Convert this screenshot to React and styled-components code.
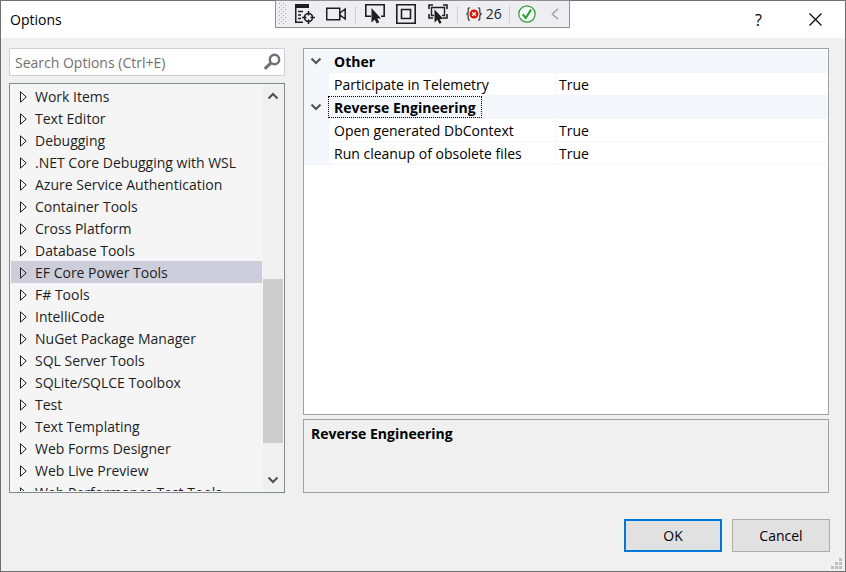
import React from "react";
import styled, { createGlobalStyle, css } from "styled-components";

const GlobalStyle = createGlobalStyle`
  *, *::before, *::after { box-sizing: border-box; }
  body { margin: 0; }
  body, button, input {
    font-family: "Open Sans", "Noto Sans", sans-serif;
    font-size: 14px;
    color: #1e1e1e;
  }
  button { padding: 0; border: 0; background: none; }
  ul { margin: 0; padding: 0; list-style: none; }
  svg { display: block; flex: none; }
`;

const Dialog = styled.div`
  position: relative;
  display: flex;
  flex-direction: column;
  height: 100vh;
  border: 1px solid #707070;
  background: #f0f0f0;
`;

const TitleBar = styled.header`
  display: flex;
  align-items: center;
  height: 37px;
  padding: 0 1px 0 9px;
  background: #fff;
`;

const Title = styled.h1`
  flex: 1;
  margin: 0;
  font-size: 14px;
  font-weight: 400;
  color: #000;
`;

const CaptionButton = styled.button`
  display: flex;
  align-items: center;
  justify-content: center;
  width: 57px;
  height: 36px;
  font-size: 16px;
  color: #000;
`;

const DebugBar = styled.div`
  position: absolute;
  top: -1px;
  left: calc(50% - 148px);
  display: flex;
  align-items: center;
  width: 295px;
  height: 28px;
  border: 1px solid #8f8f94;
  padding-left: 3px;
  background: #eeeef2;
`;

const ToolButton = styled.button`
  display: flex;
  align-items: center;
  justify-content: center;
  gap: 4px;
  width: ${(p) => p.$width || 32}px;
  height: 24px;
  line-height: 20px;
`;

const Separator = styled.span`
  width: 1px;
  height: 17px;
  margin: 0 ${(p) => p.$gap || 2}px;
  background: #cccedb;
`;

const Body = styled.main`
  flex: 1;
  min-height: 0;
  display: grid;
  grid-template-columns: 276px minmax(0, 1fr);
  grid-template-rows: minmax(0, 1fr);
  gap: 18px;
  padding: 10px 16px 0 8px;
`;

const Column = styled.div`
  display: flex;
  flex-direction: column;
  gap: ${(p) => p.$gap}px;
  min-height: 0;
`;

const SearchBox = styled.label`
  display: flex;
  align-items: center;
  height: 28px;
  padding: 0 3px 0 5px;
  border: 1px solid #cccedb;
  background: #fff;
`;

const SearchInput = styled.input`
  flex: 1;
  min-width: 0;
  padding: 0;
  border: 0;
  outline: 0;
  background: none;
  &::placeholder { color: #717171; opacity: 1; }
`;

const TreePanel = styled.div`
  flex: 1;
  display: flex;
  min-height: 0;
  padding: 1px;
  border: 1px solid #828790;
  background: #f5f5f5;
`;

const Tree = styled.ul`
  flex: 1;
  min-width: 0;
  overflow: hidden;
`;

const TreeItem = styled.li`
  display: flex;
  align-items: center;
  gap: 7px;
  height: 22px;
  padding: 2px 0 0 8px;
  line-height: 20px;
  white-space: nowrap;
  background: ${(p) => (p.$selected ? "#cccedb" : "transparent")};
`;

const ScrollBar = styled.div`
  display: flex;
  flex-direction: column;
  width: 20px;
  margin-left: 1px;
  background: #f0f0f0;
`;

const ScrollButton = styled.button`
  display: flex;
  align-items: center;
  justify-content: center;
  height: 22px;
`;

const Track = styled.div`
  flex: 1;
  display: flex;
  flex-direction: column;
`;

const Spacer = styled.div`
  flex: ${(p) => p.$share};
`;

const Thumb = styled.div`
  flex: 164;
  background: #cdcdcd;
`;

const GridPanel = styled.section`
  flex: 1;
  min-height: 0;
  padding-top: 1px;
  border: 1px solid #a0a0a0;
  background: #fff;
`;

const PropertyTable = styled.table`
  width: 100%;
  table-layout: fixed;
  border-collapse: separate;
  border-spacing: 0;
  color: #000;
  line-height: 20px;
`;

const GutterCol = styled.col`
  width: 25px;
`;

const NameCol = styled.col`
  width: 226px;
`;

const cell = css`
  height: 23px;
  padding: 0;
  text-align: left;
  white-space: nowrap;
  border-bottom: 1px solid #f3f7fc;
`;

const Gutter = styled.td`
  ${cell}
  background: #f3f7fc;
`;

const Category = styled.th`
  ${cell}
  font-weight: 700;
  background: #f3f7fc;
`;

const CategoryLabel = styled.span`
  display: inline-block;
  height: 22px;
  margin-left: -1px;
  padding: 2px 5px 0;
  line-height: 18px;
  vertical-align: top;
  border: 1px dotted ${(p) => (p.$focused ? "#000" : "transparent")};
`;

const Name = styled.th`
  ${cell}
  padding: 2px 0 0 5px;
  font-weight: 400;
`;

const Value = styled.td`
  ${cell}
  padding: 2px 0 0 3px;
  border-left: 1px solid #f3f7fc;
`;

const ToggleButton = styled.button`
  display: flex;
  align-items: center;
  justify-content: center;
  width: 24px;
  height: 22px;
`;

const HelpPanel = styled.section`
  height: 74px;
  padding: 4px 7px;
  border: 1px solid #a0a0a0;
`;

const HelpTitle = styled.h2`
  margin: 0;
  font-size: 14px;
  line-height: 20px;
  font-weight: 700;
  color: #000;
`;

const Footer = styled.footer`
  display: flex;
  justify-content: flex-end;
  gap: 10px;
  padding: 26px 15px 19px;
`;

const DialogButton = styled.button`
  width: 98px;
  height: 33px;
  color: #000;
  background: #e1e1e1;
  border: ${(p) => (p.$primary ? "2px solid #0078d7" : "1px solid #adadad")};
`;

const Grip = styled.svg`
  position: absolute;
  right: 3px;
  bottom: 2px;
`;

const treeItems = [
  "Work Items", "Text Editor", "Debugging", ".NET Core Debugging with WSL",
  "Azure Service Authentication", "Container Tools", "Cross Platform",
  "Database Tools", "EF Core Power Tools", "F# Tools", "IntelliCode",
  "NuGet Package Manager", "SQL Server Tools", "SQLite/SQLCE Toolbox", "Test",
  "Text Templating", "Web Forms Designer", "Web Live Preview",
  "Web Performance Test Tools",
];

const categories = [
  { name: "Other", rows: [["Participate in Telemetry", "True"]] },
  {
    name: "Reverse Engineering",
    focused: true,
    rows: [
      ["Open generated DbContext", "True"],
      ["Run cleanup of obsolete files", "True"],
    ],
  },
];

const Chevron = ({ up }) => (
  <svg width="12" height="8" viewBox="0 0 12 8" fill="none" stroke="#505050" strokeWidth="2">
    <path d={up ? "M1.5 6.5 6 2l4.5 4.5" : "M1.5 1.5 6 6l4.5-4.5"} />
  </svg>
);

const Expander = () => (
  <svg width="9" height="12" viewBox="0 0 9 12" fill="none" stroke="#1e1e1e">
    <path d="M1.5 .8v10.4L7.2 6z" />
  </svg>
);

const dots = [];
for (let y = 0; y < 22; y += 2) {
  for (let x = (y / 2) % 2 ? 2 : 0; x < 7; x += 4) dots.push([x, y]);
}

const DotGrip = () => (
  <svg width="10" height="22" viewBox="0 0 10 22" fill="#a8a8b0">
    {dots.map(([x, y]) => <rect key={x + "-" + y} x={x} y={y} width="1" height="1" />)}
  </svg>
);

const VisualTreeIcon = () => (
  <svg width="20" height="20" viewBox="0 0 20 20" fill="none" stroke="#1e1e1e">
    <path fill="#1e1e1e" stroke="none" d="M0 0h14v4H0z" />
    <path strokeWidth="1.5" d="M.75 3v15.25H8" />
    <path strokeWidth="1.4" d="M3 7.5h5M3 11h3M3 14.5h3" />
    <circle cx="13.5" cy="13.5" r="4" strokeWidth="1.6" />
    <path strokeWidth="1.6" d="M13.5 7v4.5m0 4V20M7 13.5h4.5m4 0H20" />
  </svg>
);

const CameraIcon = () => (
  <svg width="20" height="14" viewBox="0 0 20 14" fill="none" stroke="#1e1e1e" strokeWidth="1.5">
    <path d="M.75 1.25h13v11.5h-13zM14 6l5.2-4v10L14 8z" />
  </svg>
);

const SelectIcon = () => (
  <svg width="20" height="20" viewBox="0 0 20 20">
    <path d="M6 12.2H.8V.8h18.4v11.4H16" fill="none" stroke="#1e1e1e" strokeWidth="1.6" />
    <path d="M6.5 4v14.5l3.2-3 2 4 2.5-1.2-2-3.8H16z" fill="#1e1e1e" />
  </svg>
);

const AdornerIcon = () => (
  <svg width="20" height="20" viewBox="0 0 20 20" fill="none" stroke="#1e1e1e" strokeWidth="1.6">
    <path d="M.8.8h18.4v18.4H.8z" />
    <path d="M5.5 5.5h9v9h-9z" />
  </svg>
);

const TrackIcon = () => (
  <svg width="20" height="20" viewBox="0 0 20 20">
    <path d="M1 5V1h4m10 0h4v4m0 5v4h-4M5 14H1v-4" fill="none" stroke="#1e1e1e" strokeWidth="1.6" />
    <path d="M6 11.5H3.5v-8h13v8H14" fill="none" stroke="#1e1e1e" strokeWidth="1.4" />
    <path d="M6.5 5.5v13l3-2.7 1.8 4 2.3-1-1.9-3.8h3.8z" fill="#1e1e1e" />
  </svg>
);

const BindingErrorIcon = () => (
  <svg width="16" height="14" viewBox="0 0 16 14" fill="none">
    <path stroke="#424242" strokeWidth="1.3" d="M4 .8H3.5Q2.2.8 2.2 2.4v2.4Q2.2 7 .3 7q1.9 0 1.9 2.2v2.4q0 1.6 1.3 1.6H4M12 .8h.5q1.3 0 1.3 1.6v2.4q0 2.2 1.9 2.2-1.9 0-1.9 2.2v2.4q0 1.6-1.3 1.6H12" />
    <circle cx="8" cy="7" r="4.5" fill="#e51400" />
    <path stroke="#fff" strokeWidth="1.4" d="m6.2 5.2 3.6 3.6m0-3.6L6.2 8.8" />
  </svg>
);

const CheckIcon = () => (
  <svg width="18" height="18" viewBox="0 0 18 18" fill="none" stroke="#2a9d34">
    <circle cx="9" cy="9" r="8.2" strokeWidth="1.2" fill="#f6faf6" />
    <path d="m4.7 9.2 3 3.8 5.4-8.4" strokeWidth="2" />
  </svg>
);

const CollapseIcon = () => (
  <svg width="8" height="12" viewBox="0 0 8 12" fill="none" stroke="#a0a0a5" strokeWidth="1.5">
    <path d="M7 .8 1.3 6 7 11.2" />
  </svg>
);

const SearchIcon = () => (
  <svg width="18" height="18" viewBox="0 0 18 18" fill="none" stroke="#717171">
    <circle cx="11.5" cy="6.5" r="4.7" strokeWidth="2.4" />
    <path d="M8 9.8 1.8 15.8" strokeWidth="3" />
  </svg>
);

const gripSquares = [[8, 0], [4, 4], [8, 4], [0, 8], [4, 8], [8, 8]];

export default function App() {
  return (
    <>
      <GlobalStyle />
      <Dialog role="dialog" aria-labelledby="dialog-title">
        <TitleBar>
          <Title id="dialog-title">Options</Title>
          <CaptionButton aria-label="Help">?</CaptionButton>
          <CaptionButton aria-label="Close">
            <svg width="13" height="13" viewBox="0 0 13 13" stroke="#000" strokeWidth="1.2">
              <path d="m.5.5 12 12m0-12-12 12" />
            </svg>
          </CaptionButton>
        </TitleBar>

        <DebugBar role="toolbar" aria-label="Debug tools">
          <DotGrip />
          <ToolButton aria-label="Live visual tree"><VisualTreeIcon /></ToolButton>
          <ToolButton aria-label="Record"><CameraIcon /></ToolButton>
          <Separator $gap={3} />
          <ToolButton aria-label="Select element"><SelectIcon /></ToolButton>
          <ToolButton aria-label="Layout adorners"><AdornerIcon /></ToolButton>
          <ToolButton aria-label="Track focused element"><TrackIcon /></ToolButton>
          <Separator $gap={3} />
          <ToolButton $width={47} aria-label="26 binding failures"><BindingErrorIcon />26</ToolButton>
          <Separator $gap={2} />
          <ToolButton $width={30} aria-label="Hot reload"><CheckIcon /></ToolButton>
          <ToolButton $width={28} aria-label="Collapse"><CollapseIcon /></ToolButton>
        </DebugBar>

        <Body>
          <Column $gap={7}>
            <SearchBox>
              <SearchInput type="text" aria-label="Search Options" placeholder="Search Options (Ctrl+E)" />
              <SearchIcon />
            </SearchBox>
            <TreePanel>
              <Tree role="tree" aria-label="Option pages">
                {treeItems.map((item) => {
                  const selected = item === "EF Core Power Tools";
                  return (
                    <TreeItem key={item} role="treeitem" aria-selected={selected} $selected={selected}>
                      <Expander />
                      {item}
                    </TreeItem>
                  );
                })}
              </Tree>
              <ScrollBar>
                <ScrollButton aria-label="Scroll up"><Chevron up /></ScrollButton>
                <Track>
                  <Spacer $share={172} />
                  <Thumb />
                  <Spacer $share={26} />
                </Track>
                <ScrollButton aria-label="Scroll down"><Chevron /></ScrollButton>
              </ScrollBar>
            </TreePanel>
          </Column>

          <Column $gap={4}>
            <GridPanel>
              <PropertyTable>
                <colgroup>
                  <GutterCol />
                  <NameCol />
                  <col />
                </colgroup>
                {categories.map((category) => (
                  <tbody key={category.name}>
                    <tr>
                      <Gutter>
                        <ToggleButton aria-label={"Collapse " + category.name}><Chevron /></ToggleButton>
                      </Gutter>
                      <Category colSpan={2} scope="rowgroup">
                        <CategoryLabel $focused={category.focused}>{category.name}</CategoryLabel>
                      </Category>
                    </tr>
                    {category.rows.map(([name, value]) => (
                      <tr key={name}>
                        <Gutter />
                        <Name scope="row">{name}</Name>
                        <Value>{value}</Value>
                      </tr>
                    ))}
                  </tbody>
                ))}
              </PropertyTable>
            </GridPanel>
            <HelpPanel>
              <HelpTitle>Reverse Engineering</HelpTitle>
            </HelpPanel>
          </Column>
        </Body>

        <Footer>
          <DialogButton $primary>OK</DialogButton>
          <DialogButton>Cancel</DialogButton>
        </Footer>
        <Grip width="11" height="11" viewBox="0 0 11 11" fill="#bfbfbf" aria-hidden="true">
          {gripSquares.map(([x, y]) => <rect key={x + "-" + y} x={x} y={y} width="3" height="3" />)}
        </Grip>
      </Dialog>
    </>
  );
}
